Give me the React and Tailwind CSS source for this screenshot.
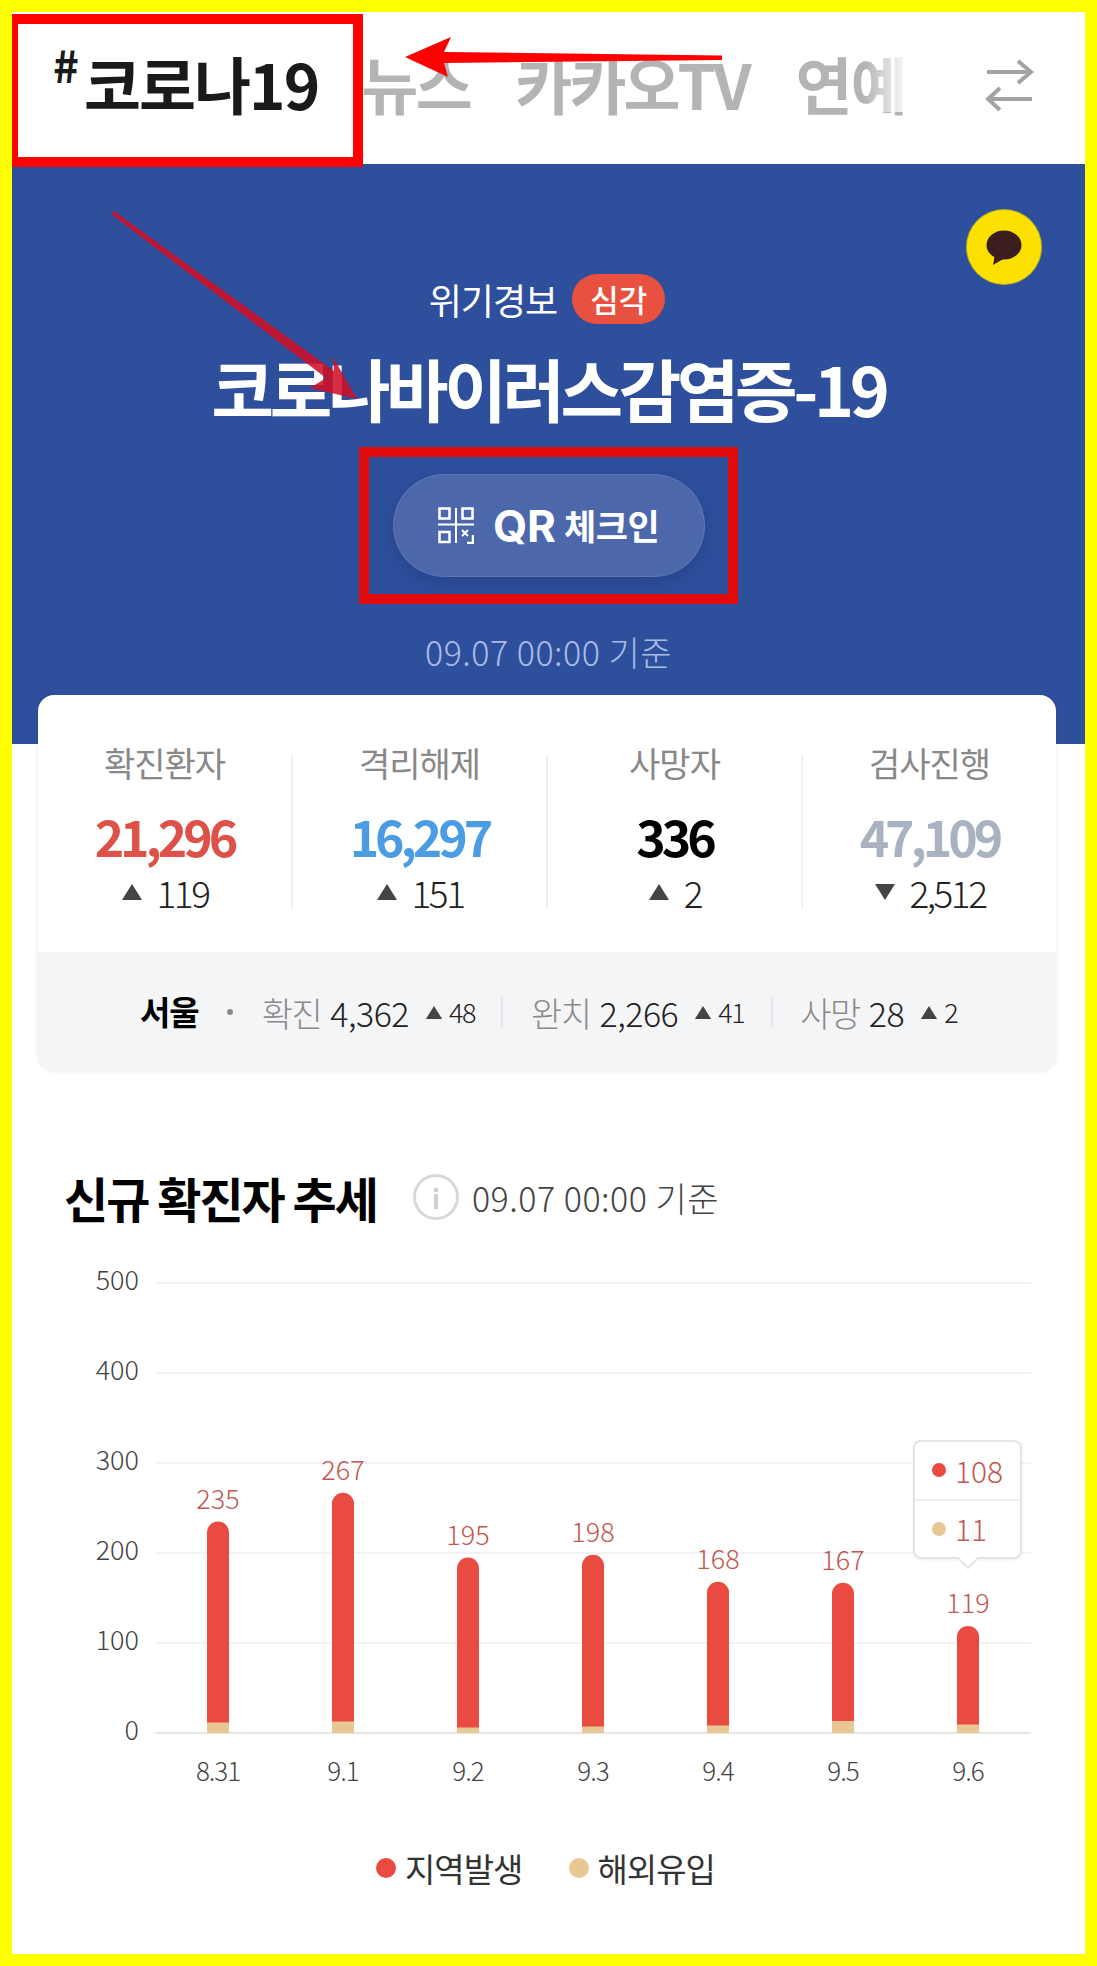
const KR = '"Noto Sans CJK KR", "Noto Sans", sans-serif';

const stats = [
  { label: '확진환자', value: '21,296', color: 'text-[#dd5148]', delta: '119', up: true },
  { label: '격리해제', value: '16,297', color: 'text-[#4a9de2]', delta: '151', up: true },
  { label: '사망자', value: '336', color: 'text-black', delta: '2', up: true },
  { label: '검사진행', value: '47,109', color: 'text-[#a9b2c0]', delta: '2,512', up: false },
];

const bars = [
  { x: 218, total: 235, sub: 10.5, label: '8.31' },
  { x: 343, total: 267, sub: 11.5, label: '9.1' },
  { x: 468, total: 195, sub: 5.5, label: '9.2' },
  { x: 593, total: 198, sub: 6.5, label: '9.3' },
  { x: 718, total: 168, sub: 7.5, label: '9.4' },
  { x: 843, total: 167, sub: 12, label: '9.5' },
  { x: 968, total: 119, sub: 8.5, label: '9.6' },
];

function Tri({ up = true, className }) {
  return (
    <svg viewBox="0 0 20 16" className={className} fill="#444">
      {up ? <path d="M10 0 20 16H0Z" /> : <path d="M0 0H20L10 16Z" />}
    </svg>
  );
}

function SeoulItem({ label, value, delta }) {
  return (
    <div className="flex items-center">
      <span className="text-[#8a8a8a] text-[34px] font-light tracking-[-1.5px]">{label}</span>
      <span className="ml-[9px] text-[#222] text-[34px] font-light tracking-[-0.5px]">{value}</span>
      <Tri className="ml-[16px] w-[18px] h-[13px]" />
      <span className="ml-[6px] text-[#222] text-[27px] font-light tracking-[-1.5px]">{delta}</span>
    </div>
  );
}

function Chart() {
  const ys = [500, 400, 300, 200, 100, 0];
  return (
    <svg width="1073" height="560" viewBox="12 1250 1073 560" className="block" style={{ fontFamily: KR }}>
      {ys.map((v) => {
        const y = 1733 - v * 0.9;
        return (
          <g key={v}>
            <line x1="156" x2="1031" y1={y} y2={y} stroke={v === 0 ? '#e6e6e6' : '#f3f3f3'} strokeWidth="2" />
            <text x="139" y={y + 7} textAnchor="end" fontSize="27" fontWeight="300" fill="#444">{v}</text>
          </g>
        );
      })}
      {bars.map((b) => {
        const top = 1733 - b.total * 0.9;
        return (
          <g key={b.label}>
            <path d={`M${b.x - 11} 1733V${top + 11}a11 11 0 0 1 22 0V1733Z`} fill="#e94b40" />
            <rect x={b.x - 11} y={1733 - b.sub} width="22" height={b.sub} fill="#e9c795" />
            <text x={b.x} y={top - 13} textAnchor="middle" fontSize="27" fontWeight="300" fill="#bf5850">{b.total}</text>
            <text x={b.x} y="1781" textAnchor="middle" fontSize="26" fontWeight="300" fill="#444" letterSpacing="-1">{b.label}</text>
          </g>
        );
      })}
    </svg>
  );
}

export default function App() {
  return (
    <div className="relative w-[1097px] h-[1966px] border-[12px] border-[#ffff00] bg-white overflow-hidden" style={{ fontFamily: KR }}>
      {/* nav */}
      <div className="relative flex items-center h-[152px] pb-[10px] bg-white">
        <div className="flex items-start ml-[41px] text-[#1a1a1a] font-bold">
          <span className="text-[44px] leading-none mt-[-10px]">#</span>
          <span className="text-[62px] leading-none tracking-[-2px] ml-[5px]">코로나19</span>
        </div>
        <span className="ml-[43px] text-[62px] leading-none font-bold text-[#b4b4b4] tracking-[-2.5px]">뉴스</span>
        <span className="ml-[45px] text-[62px] leading-none font-bold text-[#b4b4b4] tracking-[-3px]">카카오TV</span>
        <span className="ml-[47px] text-[62px] leading-none font-bold text-[#b4b4b4] tracking-[-2px]">연예</span>
        <div className="absolute left-[852px] top-[30px] w-[45px] h-[70px] bg-gradient-to-r from-white/0 to-white" />
        <svg className="absolute left-[972px] top-[44px]" width="52" height="62" viewBox="0 0 52 62" fill="none" stroke="#a3a3a3" strokeWidth="4">
          <path d="M3 16H47M34 5 47 16 34 27" />
          <path d="M48 43H4M16 32 4 43 16 54" />
        </svg>
      </div>

      {/* hero */}
      <div className="relative flex flex-col items-center h-[580px] bg-[#2e4f9c] text-white">
        <div className="absolute left-[954px] top-[45px] w-[76px] h-[76px] rounded-full bg-[#fbe000] border border-[#5f6f4a]/40 flex items-center justify-center">
          <svg width="36" height="36" viewBox="0 0 36 36" className="mt-[2px]">
            <ellipse cx="18" cy="15" rx="17.5" ry="14.5" fill="#3c1e1e" />
            <path d="M9 24 7 35 19 28Z" fill="#3c1e1e" />
          </svg>
        </div>
        <div className="flex items-center mt-[110px] h-[50px] -ml-[3px]">
          <span className="text-[36px] tracking-[-1px] font-normal">위기경보</span>
          <span className="ml-[15px] w-[93px] h-[50px] rounded-full bg-[#e8503f] flex items-center justify-center text-[31px] font-medium">심각</span>
        </div>
        <div className="mt-[19px] text-[68px] leading-[90px] font-bold tracking-[-4.4px]">코로나바이러스감염증-19</div>
        <div className="mt-[41px] flex items-center justify-center w-[312px] h-[103px] rounded-full bg-[#4c68ab] border border-white/10 shadow-[0_6px_16px_rgba(20,40,100,0.25)]">
          <svg width="36" height="37" viewBox="0 0 36 37" fill="none" stroke="white" strokeWidth="2.5" className="mr-[4px]">
            <rect x="1.5" y="1.5" width="10" height="10" />
            <rect x="24.5" y="1.5" width="10" height="10" />
            <rect x="1.5" y="25" width="10" height="10" />
            <path d="M18 1V36M0 17.5H36" strokeWidth="2" />
            <path d="M24 23l6 6M30 23l-6 6" strokeWidth="2" />
            <path d="M35 28v8h-6" strokeWidth="2.5" />
          </svg>
          <span className="ml-[15px] text-[44px] leading-none font-bold" style={{ fontFamily: 'Inter, sans-serif' }}>QR</span>
          <span className="ml-[8px] text-[35px] font-bold tracking-[-0.5px]">체크인</span>
        </div>
        <div className="mt-[49px] text-[34px] font-light text-[#a8bbe6] tracking-[0.5px]">09.07 00:00 기준</div>
      </div>

      {/* card */}
      <div className="relative -mt-[49px] ml-[26px] mr-[29px] h-[375px] rounded-[16px] bg-white shadow-[0_1px_4px_rgba(0,0,0,0.10)] overflow-hidden flex flex-col">
        <div className="h-[257px] grid grid-cols-[255px_255px_255px_1fr] pt-[60px]">
          {stats.map((s, i) => (
            <div key={s.label} className={`h-[153px] flex flex-col items-center ${i < 3 ? 'border-r-2 border-[#f0f0f0]' : ''}`}>
              <div className="text-[34px] leading-[40px] -mt-[12px] text-[#888] tracking-[-1px]">{s.label}</div>
              <div className={`mt-[24px] text-[50px] leading-[56px] font-bold tracking-[-4px] ${s.color}`}>{s.value}</div>
              <div className="mt-[5px] flex items-center">
                <Tri up={s.up} className="w-[22px] h-[16px]" />
                <span className="ml-[14px] text-[37px] leading-[48px] font-light text-[#222] tracking-[-2.5px]">{s.delta}</span>
              </div>
            </div>
          ))}
        </div>
        <div className="flex-1 bg-[#f4f5f7] flex items-center pl-[102px] pt-[2px]">
          <span className="text-[33px] font-bold text-black tracking-[-1px]">서울</span>
          <span className="ml-[28px] w-[6px] h-[6px] rounded-full bg-[#888]" />
          <span className="ml-[29px]"><SeoulItem label="확진" value="4,362" delta="48" /></span>
          <span className="ml-[26px] w-[2px] h-[30px] bg-[#e4e5e8]" />
          <span className="ml-[28px]"><SeoulItem label="완치" value="2,266" delta="41" /></span>
          <span className="ml-[27px] w-[2px] h-[30px] bg-[#e4e5e8]" />
          <span className="ml-[27px]"><SeoulItem label="사망" value="28" delta="2" /></span>
        </div>
      </div>

      {/* chart section */}
      <div className="mt-[95px] ml-[52px] flex items-center h-[64px]">
        <span className="text-[48px] font-bold text-black tracking-[-2px]">신규 확진자 추세</span>
        <span className="ml-[36px] w-[46px] h-[46px] rounded-full border-[3px] border-[#d8d8d8] flex items-center justify-center text-[26px] font-bold text-[#cfcfcf]">i</span>
        <span className="ml-[13px] text-[34px] font-light text-[#444] tracking-[0.5px]">09.07 00:00 기준</span>
      </div>
      <div className="relative mt-[21px]">
        <Chart />
        <div className="absolute left-[901px] top-[190px] w-[109px] h-[119px] rounded-[8px] border-2 border-[#e4e4e4] bg-white shadow-[0_1px_3px_rgba(0,0,0,0.06)] flex flex-col">
          <div className="flex-1 flex items-center pl-[17px] border-b-2 border-[#f0f0f0]">
            <span className="w-[14px] h-[14px] rounded-full bg-[#e94b40]" />
            <span className="ml-[9px] text-[30px] font-light text-[#bf5850]">108</span>
          </div>
          <div className="flex-1 flex items-center pl-[17px]">
            <span className="w-[14px] h-[14px] rounded-full bg-[#e9c795]" />
            <span className="ml-[9px] text-[30px] font-light text-[#bf5850]">11</span>
          </div>
          <div className="absolute left-[45px] -bottom-[9px] w-[16px] h-[16px] rotate-45 bg-white border-r-2 border-b-2 border-[#e4e4e4]" />
        </div>
      </div>
      <div className="flex items-center mt-[36px] ml-[364px] text-[33px] leading-[44px] text-[#333] tracking-[-1px]">
        <span className="w-[20px] h-[20px] rounded-full bg-[#e94b40]" />
        <span className="ml-[9px]">지역발생</span>
        <span className="ml-[47px] w-[20px] h-[20px] rounded-full bg-[#e9c795]" />
        <span className="ml-[8px]">해외유입</span>
      </div>

      {/* annotations */}
      <div className="absolute left-[-4px] top-[2px] w-[355px] h-[153px] border-[10px] border-[#ff0000]" />
      <svg className="absolute left-[-12px] top-[-12px] pointer-events-none" width="1097" height="700" viewBox="0 0 1097 700">
        <path d="M722 55.5 722 60 444 63 448 77 405 57 451 37 444 52Z" fill="#ff0000" />
        <path d="M111 214 114 211 334 371 333 357 357 399 310 388 326 378Z" fill="#cf1027" fillOpacity="0.88" />
      </svg>
      <div className="absolute left-[347px] top-[435px] w-[379px] h-[157px] border-[10px] border-[#e10a0a]" />
    </div>
  );
}
